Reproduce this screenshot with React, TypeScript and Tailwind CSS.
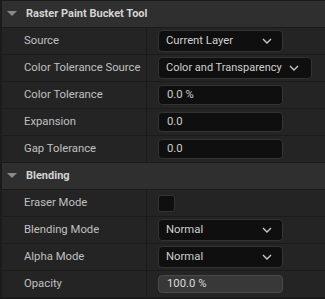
import React from "react";

const Chevron = () => (
  <svg width="10" height="6" viewBox="0 0 10 6" className="shrink-0">
    <path d="M1 1 L5 5 L9 1" fill="none" stroke="#c8c8c8" strokeWidth="1.4" />
  </svg>
);

const Header = ({ title }: { title: string }) => (
  <div className="h-[26px] bg-[#2f2f2f] flex items-center">
    <svg width="10" height="6" viewBox="0 0 10 6" className="ml-[5px] mr-[9px]">
      <path d="M0 0 L10 0 L5 5 Z" fill="#8a8a8a" />
    </svg>
    <span className="text-[11px] font-bold text-[#d4d4d4]">{title}</span>
  </div>
);

const Row = ({ label, children }: { label: string; children?: React.ReactNode }) => (
  <div className="h-[26px] flex bg-[#242424]">
    <div className="w-[144px] flex items-center pl-[22px] text-[11.3px] text-[#c0c0c0] whitespace-nowrap">{label}</div>
    <div className="w-px bg-[#1b1b1b]" />
    <div className="flex-1 flex items-center pl-[11px]">{children}</div>
  </div>
);

const Dropdown = ({ text }: { text: string }) => (
  <div className="w-[125px] h-[22px] rounded-[4px] bg-[#0f0f0f] border border-[#333333] flex items-center justify-between pl-[7px] pr-[10px] text-[11.3px] text-[#cfcfcf]">
    <span>{text}</span>
    <Chevron />
  </div>
);

const Input = ({ text }: { text: string }) => (
  <div className="w-[125px] h-[20px] rounded-[4px] bg-[#0f0f0f] border border-[#333333] flex items-center pl-[8px] text-[11.3px] text-[#cfcfcf]">
    {text}
  </div>
);

export default function App() {
  return (
    <div
      className="w-[325px] h-[299px] bg-[#1b1b1b] pt-px pl-[2px] flex flex-col gap-px overflow-hidden"
      style={{ fontFamily: "Roboto, 'Noto Sans', sans-serif" }}
    >
      <Header title="Raster Paint Bucket Tool" />
      <Row label="Source">
        <Dropdown text="Current Layer" />
      </Row>
      <Row label="Color Tolerance Source">
        <div className="w-[154px] h-[22px] rounded-[4px] bg-[#0f0f0f] border border-[#333333] flex items-center justify-between pl-[7px] pr-[12px] text-[11px] text-[#cfcfcf] whitespace-nowrap">
          <span>Color and Transparency</span>
          <Chevron />
        </div>
      </Row>
      <Row label="Color Tolerance">
        <Input text="0.0 %" />
      </Row>
      <Row label="Expansion">
        <Input text="0.0" />
      </Row>
      <Row label="Gap Tolerance">
        <Input text="0.0" />
      </Row>
      <Header title="Blending" />
      <Row label="Eraser Mode">
        <div className="w-[17px] h-[17px] rounded-[3px] bg-[#0f0f0f] border border-[#333333]" />
      </Row>
      <Row label="Blending Mode">
        <Dropdown text="Normal" />
      </Row>
      <Row label="Alpha Mode">
        <Dropdown text="Normal" />
      </Row>
      <Row label="Opacity">
        <div className="w-[125px] h-[18px] rounded-[4px] bg-[#383838] border border-[#4a4a4a] flex items-center pl-[8px] text-[11.3px] text-[#dcdcdc]">
          100.0 %
        </div>
      </Row>
    </div>
  );
}
